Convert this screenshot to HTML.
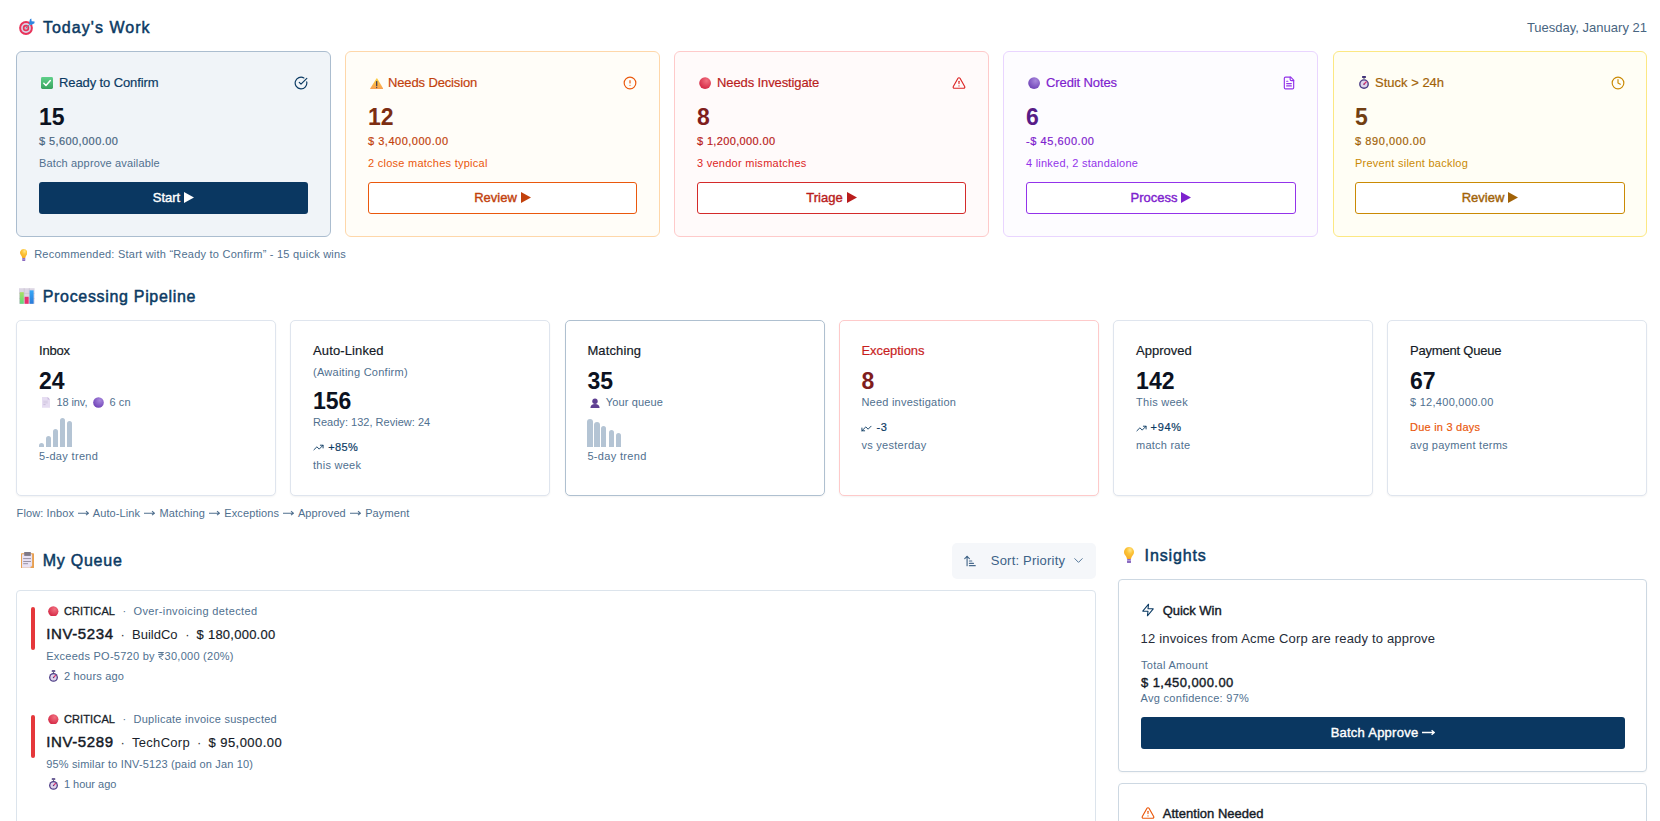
<!DOCTYPE html>
<html><head><meta charset="utf-8"><title>Today's Work</title>
<style>
html,body{margin:0;padding:0;background:#fff;}
body{width:1660px;height:821px;position:relative;overflow:hidden;font-family:"Liberation Sans", sans-serif;}
.t{position:absolute;white-space:nowrap;}
svg{display:block}
.t svg{display:inline-block}
</style></head><body>
<svg style="position:absolute;left:18.0px;top:18.0px" width="18" height="18" viewBox="0 0 18 18" ><circle cx="8" cy="10" r="6.9" fill="#e8335a"/><circle cx="8" cy="10" r="4.9" fill="#d9d2e6"/><circle cx="8" cy="10" r="3.2" fill="#e8335a"/><circle cx="8" cy="10" r="1.5" fill="#d9d2e6"/><circle cx="8" cy="10" r=".6" fill="#8a7a90"/><path d="M8 10 L12.5 5.5" stroke="#7a8aa0" stroke-width="1"/><path d="M10.5 7.5 L12.8 4.4 L13.2 6.8 Z" fill="#46b4f0"/><path d="M12 1.2 L13.3 0.6 L13.6 3.2 L16.6 3.4 L16.4 5.2 L13.4 7 L11 5 Z" fill="#2f86e0"/></svg>
<div id="t317fed02" class="t" style="left:42.9px;top:20px;font-size:16px;line-height:16px;color:#0b3a63;-webkit-text-stroke:0.48px currentColor;letter-spacing:1.042px;">Today's Work</div>
<div id="t44567f1c" class="t" style="right:13.0px;top:21px;font-size:13px;line-height:13px;color:#486581;letter-spacing:0.008px;">Tuesday, January 21</div>
<div style="position:absolute;left:16.0px;top:51.0px;width:315.0px;height:186.0px;box-sizing:border-box;border:1px solid #abbdcf;background:#f0f4f8;border-radius:6px;"></div>
<svg style="position:absolute;left:41.0px;top:76.5px" width="12" height="12" viewBox="0 0 12 12" ><defs><linearGradient id="gck" x1="0" y1="0" x2="0" y2="1"><stop offset="0" stop-color="#5fd08a"/><stop offset="1" stop-color="#38a35e"/></linearGradient></defs><rect x="0" y="0" width="12" height="12" rx="1.4" fill="url(#gck)"/><path d="M2.8 6.3 L5 8.5 L9.3 3.6" fill="none" stroke="#fff" stroke-width="1.5" stroke-linecap="round" stroke-linejoin="round"/></svg>
<div id="tb0c5841e" class="t" style="left:59.0px;top:76px;font-size:13px;line-height:13px;color:#0b3a63;-webkit-text-stroke:0.18px currentColor;letter-spacing:-0.104px;">Ready to Confirm</div>
<svg style="position:absolute;left:294.0px;top:76.0px" width="14" height="14" viewBox="0 0 24 24" fill="none" stroke="#0b3a63" stroke-width="2" stroke-linecap="round" stroke-linejoin="round"><path d="M21.801 10A10 10 0 1 1 17 3.335"/><path d="m9 11 3 3L22 4"/></svg>
<div id="t6840ec25" class="t" style="left:39.0px;top:106px;font-size:23px;line-height:23px;color:#0c1221;font-weight:700;">15</div>
<div id="t1ae9d989" class="t" style="left:39.0px;top:136px;font-size:11px;line-height:11px;color:#486581;-webkit-text-stroke:0.18px currentColor;letter-spacing:0.415px;">$ 5,600,000.00</div>
<div id="tfbac6d84" class="t" style="left:39.0px;top:158px;font-size:11px;line-height:11px;color:#50708f;letter-spacing:0.149px;">Batch approve available</div>
<div style="position:absolute;left:39.0px;top:182.0px;width:269.0px;height:32.0px;background:#0a3761;border-radius:3px;"></div>
<div id="t3e6e39a4" class="t" style="left:39.0px;width:269.0px;text-align:center;top:191px;font-size:13px;line-height:13px;color:#ffffff;-webkit-text-stroke:0.39px currentColor;">Start<svg width="10" height="11" viewBox="0 0 10 11" style="display:inline-block;vertical-align:-1px;margin-left:4px"><path d="M0 0L10 5.5L0 11Z" fill="currentColor"/></svg></div>
<div style="position:absolute;left:345.0px;top:51.0px;width:315.0px;height:186.0px;box-sizing:border-box;border:1px solid #fed7aa;background:#fffdf8;border-radius:6px;"></div>
<svg style="position:absolute;left:369.5px;top:78.0px" width="13.4" height="11" viewBox="0 0 13.4 11" ><defs><linearGradient id="gwn" x1="0" y1="0" x2="0" y2="1"><stop offset="0" stop-color="#fcd040"/><stop offset="1" stop-color="#f9a050"/></linearGradient></defs><path d="M6.6 0.2 Q7 0 7.3 0.4 L13.2 10.6 Q13.4 11 13 11 L0.4 11 Q0 11 0.2 10.6 Z" fill="url(#gwn)"/><rect x="6.1" y="3" width="1.2" height="5.3" rx=".5" fill="#3a3550"/><circle cx="6.7" cy="9.6" r=".65" fill="#3a3550"/></svg>
<div id="t90fc54c8" class="t" style="left:388.0px;top:76px;font-size:13px;line-height:13px;color:#c2410c;-webkit-text-stroke:0.18px currentColor;letter-spacing:-0.134px;">Needs Decision</div>
<svg style="position:absolute;left:623.0px;top:76.0px" width="14" height="14" viewBox="0 0 24 24" fill="none" stroke="#ea580c" stroke-width="2" stroke-linecap="round" stroke-linejoin="round"><circle cx="12" cy="12" r="10"/><line x1="12" x2="12" y1="8" y2="12"/><line x1="12" x2="12.01" y1="16" y2="16"/></svg>
<div id="ted9cfb10" class="t" style="left:368.0px;top:106px;font-size:23px;line-height:23px;color:#7c2d12;font-weight:700;">12</div>
<div id="t7c6884d7" class="t" style="left:368.0px;top:136px;font-size:11px;line-height:11px;color:#c2410c;-webkit-text-stroke:0.18px currentColor;letter-spacing:0.508px;">$ 3,400,000.00</div>
<div id="t6dd6b202" class="t" style="left:368.0px;top:158px;font-size:11px;line-height:11px;color:#ea580c;letter-spacing:0.258px;">2 close matches typical</div>
<div style="position:absolute;left:368.0px;top:182.0px;width:269.0px;height:32.0px;box-sizing:border-box;border:1.5px solid #ea580c;background:#fff;border-radius:3px;"></div>
<div id="t7f49a446" class="t" style="left:368.0px;width:269.0px;text-align:center;top:191px;font-size:13px;line-height:13px;color:#c2410c;-webkit-text-stroke:0.39px currentColor;">Review<svg width="10" height="11" viewBox="0 0 10 11" style="display:inline-block;vertical-align:-1px;margin-left:4px"><path d="M0 0L10 5.5L0 11Z" fill="currentColor"/></svg></div>
<div style="position:absolute;left:674.0px;top:51.0px;width:315.0px;height:186.0px;box-sizing:border-box;border:1px solid #fecaca;background:#fffafa;border-radius:6px;"></div>
<svg style="position:absolute;left:699.0px;top:76.8px" width="12.2" height="12.2" viewBox="0 0 12 12" ><defs><radialGradient id="g1" cx="62%" cy="30%" r="80%"><stop offset="0" stop-color="#f27080"/><stop offset="1" stop-color="#d0203e"/></radialGradient></defs><circle cx="6" cy="6" r="5.8" fill="url(#g1)"/></svg>
<div id="t294f25de" class="t" style="left:717.0px;top:76px;font-size:13px;line-height:13px;color:#b91c1c;-webkit-text-stroke:0.18px currentColor;letter-spacing:-0.111px;">Needs Investigate</div>
<svg style="position:absolute;left:952.0px;top:76.0px" width="14" height="14" viewBox="0 0 24 24" fill="none" stroke="#dc2626" stroke-width="2" stroke-linecap="round" stroke-linejoin="round"><path d="m21.73 18-8-14a2 2 0 0 0-3.48 0l-8 14A2 2 0 0 0 4 21h16a2 2 0 0 0 1.73-3"/><path d="M12 9v4"/><path d="M12 17h.01"/></svg>
<div id="t9b16b431" class="t" style="left:697.0px;top:106px;font-size:23px;line-height:23px;color:#7f1d1d;font-weight:700;">8</div>
<div id="t365aa6dc" class="t" style="left:697.0px;top:136px;font-size:11px;line-height:11px;color:#b91c1c;-webkit-text-stroke:0.18px currentColor;letter-spacing:0.354px;">$ 1,200,000.00</div>
<div id="tfd7c1569" class="t" style="left:697.0px;top:158px;font-size:11px;line-height:11px;color:#dc2626;letter-spacing:0.264px;">3 vendor mismatches</div>
<div style="position:absolute;left:697.0px;top:182.0px;width:269.0px;height:32.0px;box-sizing:border-box;border:1.5px solid #d42a2a;background:#fff;border-radius:3px;"></div>
<div id="tae7287b3" class="t" style="left:697.0px;width:269.0px;text-align:center;top:191px;font-size:13px;line-height:13px;color:#b91c1c;-webkit-text-stroke:0.39px currentColor;">Triage<svg width="10" height="11" viewBox="0 0 10 11" style="display:inline-block;vertical-align:-1px;margin-left:4px"><path d="M0 0L10 5.5L0 11Z" fill="currentColor"/></svg></div>
<div style="position:absolute;left:1003.0px;top:51.0px;width:315.0px;height:186.0px;box-sizing:border-box;border:1px solid #e9d5ff;background:#fdfcff;border-radius:6px;"></div>
<svg style="position:absolute;left:1028.0px;top:76.8px" width="12.2" height="12.2" viewBox="0 0 12 12" ><defs><radialGradient id="g2" cx="62%" cy="30%" r="80%"><stop offset="0" stop-color="#a888dc"/><stop offset="1" stop-color="#6a3cb4"/></radialGradient></defs><circle cx="6" cy="6" r="5.8" fill="url(#g2)"/></svg>
<div id="t7fb84250" class="t" style="left:1046.0px;top:76px;font-size:13px;line-height:13px;color:#7e22ce;-webkit-text-stroke:0.18px currentColor;letter-spacing:-0.105px;">Credit Notes</div>
<svg style="position:absolute;left:1282.0px;top:76.0px" width="14" height="14" viewBox="0 0 24 24" fill="none" stroke="#9333ea" stroke-width="2" stroke-linecap="round" stroke-linejoin="round"><path d="M15 2H6a2 2 0 0 0-2 2v16a2 2 0 0 0 2 2h12a2 2 0 0 0 2-2V7Z"/><path d="M14 2v4a2 2 0 0 0 2 2h4"/><path d="M10 9H8"/><path d="M16 13H8"/><path d="M16 17H8"/></svg>
<div id="te94cbec0" class="t" style="left:1026.0px;top:106px;font-size:23px;line-height:23px;color:#581c87;font-weight:700;">6</div>
<div id="t9c280847" class="t" style="left:1026.0px;top:136px;font-size:11px;line-height:11px;color:#7e22ce;-webkit-text-stroke:0.18px currentColor;letter-spacing:0.565px;">-$ 45,600.00</div>
<div id="t48015f51" class="t" style="left:1026.0px;top:158px;font-size:11px;line-height:11px;color:#9333ea;letter-spacing:0.232px;">4 linked, 2 standalone</div>
<div style="position:absolute;left:1026.0px;top:182.0px;width:270.0px;height:32.0px;box-sizing:border-box;border:1.5px solid #9333ea;background:#fff;border-radius:3px;"></div>
<div id="t68502e40" class="t" style="left:1026.0px;width:270.0px;text-align:center;top:191px;font-size:13px;line-height:13px;color:#7e22ce;-webkit-text-stroke:0.39px currentColor;">Process<svg width="10" height="11" viewBox="0 0 10 11" style="display:inline-block;vertical-align:-1px;margin-left:4px"><path d="M0 0L10 5.5L0 11Z" fill="currentColor"/></svg></div>
<div style="position:absolute;left:1333.0px;top:51.0px;width:314.0px;height:186.0px;box-sizing:border-box;border:1px solid #fce883;background:#fffef5;border-radius:6px;"></div>
<svg style="position:absolute;left:1359.0px;top:75.9px" width="10" height="13" viewBox="0 0 10 13" ><rect x="3" y="0" width="4" height="1.9" rx=".7" fill="#3f2f78"/><rect x="4.4" y="1.7" width="1.2" height="1.4" fill="#6a6a7a"/><circle cx="5" cy="8.1" r="4.9" fill="#4a3a84"/><circle cx="5" cy="8.1" r="3.5" fill="#ddd4ea"/><path d="M5 8.3 L7.2 5.9" stroke="#e0306a" stroke-width="1.3" stroke-linecap="round"/><circle cx="5" cy="8.1" r=".7" fill="#4a3a84"/></svg>
<div id="t3705e3d0" class="t" style="left:1375.0px;top:76px;font-size:13px;line-height:13px;color:#a16207;-webkit-text-stroke:0.18px currentColor;letter-spacing:0.007px;">Stuck &gt; 24h</div>
<svg style="position:absolute;left:1611.0px;top:76.0px" width="14" height="14" viewBox="0 0 24 24" fill="none" stroke="#ca8a04" stroke-width="2" stroke-linecap="round" stroke-linejoin="round"><circle cx="12" cy="12" r="10"/><polyline points="12 6 12 12 16 14"/></svg>
<div id="t4db04283" class="t" style="left:1355.0px;top:106px;font-size:23px;line-height:23px;color:#713f12;font-weight:700;">5</div>
<div id="t975d0fa7" class="t" style="left:1355.0px;top:136px;font-size:11px;line-height:11px;color:#a16207;-webkit-text-stroke:0.18px currentColor;letter-spacing:0.587px;">$ 890,000.00</div>
<div id="t7a462bca" class="t" style="left:1355.0px;top:158px;font-size:11px;line-height:11px;color:#ca8a04;letter-spacing:0.247px;">Prevent silent backlog</div>
<div style="position:absolute;left:1355.0px;top:182.0px;width:270.0px;height:32.0px;box-sizing:border-box;border:1.5px solid #ca8a04;background:#fff;border-radius:3px;"></div>
<div id="t40595d12" class="t" style="left:1355.0px;width:270.0px;text-align:center;top:191px;font-size:13px;line-height:13px;color:#a16207;-webkit-text-stroke:0.39px currentColor;">Review<svg width="10" height="11" viewBox="0 0 10 11" style="display:inline-block;vertical-align:-1px;margin-left:4px"><path d="M0 0L10 5.5L0 11Z" fill="currentColor"/></svg></div>
<svg style="position:absolute;left:19.5px;top:248.5px" width="7.5" height="12" viewBox="0 0 10 16" ><defs><radialGradient id="g3" cx="60%" cy="25%" r="80%"><stop offset="0" stop-color="#ffe58a"/><stop offset=".4" stop-color="#fcc53a"/><stop offset="1" stop-color="#f7a820"/></radialGradient></defs><path d="M5 0 A5 5 0 0 1 8.6 8.4 Q7.4 9.6 7 12 L3 12 Q2.6 9.6 1.4 8.4 A5 5 0 0 1 5 0 Z" fill="url(#g3)"/><rect x="3" y="12" width="4" height="4" rx=".8" fill="#8a6ac0"/><rect x="3" y="13.2" width="4" height=".7" fill="#c8b6e6"/></svg>
<div id="t0f0da628" class="t" style="left:34.2px;top:249px;font-size:11px;line-height:11px;color:#50708f;letter-spacing:0.234px;">Recommended: Start with &#8220;Ready to Confirm&#8221; - 15 quick wins</div>
<svg style="position:absolute;left:19.1px;top:288.0px" width="15.6" height="16" viewBox="0 0 16 16" ><rect x="0" y="0" width="16" height="16" fill="#dcd6e4"/><path d="M5.3 0 V16 M10.6 0 V16 M0 5.3 H16 M0 10.6 H16" stroke="#c4bccc" stroke-width=".6"/><defs><linearGradient id="gcg" x1="0" y1="0" x2="0" y2="1"><stop offset="0" stop-color="#a8e060"/><stop offset="1" stop-color="#60d880"/></linearGradient><linearGradient id="gcb" x1="0" y1="0" x2="0" y2="1"><stop offset="0" stop-color="#36a8f8"/><stop offset="1" stop-color="#2a7ad8"/></linearGradient></defs><rect x="0.8" y="4.1" width="4.1" height="11.9" fill="url(#gcg)"/><rect x="5.8" y="8.8" width="4.1" height="7.2" fill="#e8306e"/><rect x="10.9" y="2.2" width="4.1" height="13.8" fill="url(#gcb)"/></svg>
<div id="t9b2a11a3" class="t" style="left:42.7px;top:289px;font-size:16px;line-height:16px;color:#0b3a63;-webkit-text-stroke:0.48px currentColor;letter-spacing:0.682px;">Processing Pipeline</div>
<div style="position:absolute;left:16.0px;top:320.0px;width:260.0px;height:176.0px;box-sizing:border-box;border:1px solid #dfe5ee;background:#fff;border-radius:5px;box-shadow:0 1px 2px rgba(0,0,0,0.05);"></div>
<div style="position:absolute;left:290.0px;top:320.0px;width:260.0px;height:176.0px;box-sizing:border-box;border:1px solid #dfe5ee;background:#fff;border-radius:5px;box-shadow:0 1px 2px rgba(0,0,0,0.05);"></div>
<div style="position:absolute;left:565.0px;top:320.0px;width:260.0px;height:176.0px;box-sizing:border-box;border:1px solid #afc0d0;background:#fff;border-radius:5px;box-shadow:0 1px 2px rgba(0,0,0,0.05);"></div>
<div style="position:absolute;left:839.0px;top:320.0px;width:260.0px;height:176.0px;box-sizing:border-box;border:1px solid #fecaca;background:#fff;border-radius:5px;box-shadow:0 1px 2px rgba(0,0,0,0.05);"></div>
<div style="position:absolute;left:1113.0px;top:320.0px;width:260.0px;height:176.0px;box-sizing:border-box;border:1px solid #dfe5ee;background:#fff;border-radius:5px;box-shadow:0 1px 2px rgba(0,0,0,0.05);"></div>
<div style="position:absolute;left:1387.0px;top:320.0px;width:260.0px;height:176.0px;box-sizing:border-box;border:1px solid #dfe5ee;background:#fff;border-radius:5px;box-shadow:0 1px 2px rgba(0,0,0,0.05);"></div>
<div id="t95ac02fe" class="t" style="left:39.0px;top:344px;font-size:13px;line-height:13px;color:#141a26;-webkit-text-stroke:0.18px currentColor;letter-spacing:-0.202px;">Inbox</div>
<div id="t174eace2" class="t" style="left:39.0px;top:370px;font-size:23px;line-height:23px;color:#0c1221;font-weight:700;">24</div>
<svg style="position:absolute;left:42.0px;top:397.0px" width="8" height="10.8" viewBox="0 0 8 10.8" ><path d="M0 0 H5.6 L8 2.4 V10.8 H0 Z" fill="#e6ddf2"/><path d="M5.6 0 V2.4 H8 Z" fill="#c9b8dc"/><rect x="1.3" y="3.6" width="4.4" height="3" fill="#d6cce4" opacity=".8"/><path d="M1.3 7.6 H3.6" stroke="#b8aacb" stroke-width=".6"/></svg>
<div id="t2a19e988" class="t" style="left:56.6px;top:397px;font-size:11px;line-height:11px;color:#50708f;letter-spacing:-0.116px;">18 inv,</div>
<svg style="position:absolute;left:93.0px;top:396.8px" width="11" height="11" viewBox="0 0 12 12" ><defs><radialGradient id="g4" cx="62%" cy="30%" r="80%"><stop offset="0" stop-color="#a888dc"/><stop offset="1" stop-color="#6a3cb4"/></radialGradient></defs><circle cx="6" cy="6" r="5.8" fill="url(#g4)"/></svg>
<div id="tf9eb825a" class="t" style="left:109.4px;top:397px;font-size:11px;line-height:11px;color:#50708f;letter-spacing:0.133px;">6 cn</div>
<div style="position:absolute;left:39.0px;top:443.0px;width:5.0px;height:4.0px;background:#b4c4d4;border-radius:2.5px 2.5px 0 0;"></div>
<div style="position:absolute;left:46.1px;top:436.0px;width:5.0px;height:11.0px;background:#b4c4d4;border-radius:2.5px 2.5px 0 0;"></div>
<div style="position:absolute;left:53.2px;top:429.0px;width:5.0px;height:18.0px;background:#b4c4d4;border-radius:2.5px 2.5px 0 0;"></div>
<div style="position:absolute;left:60.3px;top:418.0px;width:5.0px;height:29.0px;background:#b4c4d4;border-radius:2.5px 2.5px 0 0;"></div>
<div style="position:absolute;left:67.4px;top:421.0px;width:5.0px;height:26.0px;background:#b4c4d4;border-radius:2.5px 2.5px 0 0;"></div>
<div id="t269ba9d4" class="t" style="left:39.0px;top:451px;font-size:11px;line-height:11px;color:#50708f;letter-spacing:0.324px;">5-day trend</div>
<div id="t59c57c16" class="t" style="left:313.0px;top:344px;font-size:13px;line-height:13px;color:#141a26;-webkit-text-stroke:0.18px currentColor;letter-spacing:0.121px;">Auto-Linked</div>
<div id="t6d39dfa5" class="t" style="left:313.0px;top:367px;font-size:11px;line-height:11px;color:#50708f;letter-spacing:0.255px;">(Awaiting Confirm)</div>
<div id="t04ad7436" class="t" style="left:313.0px;top:390px;font-size:23px;line-height:23px;color:#0c1221;font-weight:700;">156</div>
<div id="tbc1a9ae2" class="t" style="left:313.0px;top:417px;font-size:11px;line-height:11px;color:#50708f;letter-spacing:0.019px;">Ready: 132, Review: 24</div>
<svg style="position:absolute;left:313.0px;top:442.0px" width="11" height="11" viewBox="0 0 24 24" fill="none" stroke="#0b3a63" stroke-width="2" stroke-linecap="round" stroke-linejoin="round"><polyline points="22 7 13.5 15.5 8.5 10.5 2 17"/><polyline points="16 7 22 7 22 13"/></svg>
<div id="t3278b6ca" class="t" style="left:328.2px;top:442px;font-size:11px;line-height:11px;color:#0b3a63;-webkit-text-stroke:0.18px currentColor;letter-spacing:0.348px;">+85%</div>
<div id="ta2754951" class="t" style="left:313.0px;top:460px;font-size:11px;line-height:11px;color:#50708f;letter-spacing:0.268px;">this week</div>
<div id="t8afefc63" class="t" style="left:587.4px;top:344px;font-size:13px;line-height:13px;color:#141a26;-webkit-text-stroke:0.18px currentColor;letter-spacing:0.135px;">Matching</div>
<div id="t15c0de1f" class="t" style="left:587.4px;top:370px;font-size:23px;line-height:23px;color:#0c1221;font-weight:700;">35</div>
<svg style="position:absolute;left:589.5px;top:397.5px" width="10" height="10" viewBox="0 0 10 10" ><circle cx="5" cy="3.2" r="2.7" fill="#5f3f92"/><path d="M0.4 10 Q0.6 6.2 5 6 Q9.4 6.2 9.6 10 Z" fill="#5f3f92"/></svg>
<div id="tba239a81" class="t" style="left:605.7px;top:397px;font-size:11px;line-height:11px;color:#50708f;letter-spacing:0.158px;">Your queue</div>
<div style="position:absolute;left:587.0px;top:418.5px;width:6.0px;height:28.5px;background:#b4c4d4;border-radius:3.0px 3.0px 0 0;"></div>
<div style="position:absolute;left:594.2px;top:421.5px;width:6.0px;height:25.5px;background:#b4c4d4;border-radius:3.0px 3.0px 0 0;"></div>
<div style="position:absolute;left:601.4px;top:425.5px;width:5.0px;height:21.5px;background:#b4c4d4;border-radius:2.5px 2.5px 0 0;"></div>
<div style="position:absolute;left:608.6px;top:429.5px;width:5.0px;height:17.5px;background:#b4c4d4;border-radius:2.5px 2.5px 0 0;"></div>
<div style="position:absolute;left:615.8px;top:432.5px;width:5.0px;height:14.5px;background:#b4c4d4;border-radius:2.5px 2.5px 0 0;"></div>
<div id="t53017905" class="t" style="left:587.4px;top:451px;font-size:11px;line-height:11px;color:#50708f;letter-spacing:0.324px;">5-day trend</div>
<div id="tc22b44fd" class="t" style="left:861.4px;top:344px;font-size:13px;line-height:13px;color:#c81e1e;-webkit-text-stroke:0.18px currentColor;letter-spacing:-0.055px;">Exceptions</div>
<div id="t54c664ff" class="t" style="left:861.4px;top:370px;font-size:23px;line-height:23px;color:#7f1d1d;font-weight:700;">8</div>
<div id="t6f94ffde" class="t" style="left:861.4px;top:397px;font-size:11px;line-height:11px;color:#50708f;letter-spacing:0.235px;">Need investigation</div>
<svg style="position:absolute;left:861.0px;top:423.0px" width="11" height="11" viewBox="0 0 24 24" fill="none" stroke="#0b3a63" stroke-width="2" stroke-linecap="round" stroke-linejoin="round"><polyline points="2 17 10.5 8.5 15.5 13.5 22 7"/><polyline points="8 17 2 17 2 11"/></svg>
<div id="t4ccda391" class="t" style="left:876.6px;top:422px;font-size:11px;line-height:11px;color:#0b3a63;-webkit-text-stroke:0.18px currentColor;letter-spacing:0.616px;">-3</div>
<div id="t42231123" class="t" style="left:861.4px;top:440px;font-size:11px;line-height:11px;color:#50708f;letter-spacing:0.277px;">vs yesterday</div>
<div id="t45270a40" class="t" style="left:1136.1px;top:344px;font-size:13px;line-height:13px;color:#141a26;-webkit-text-stroke:0.18px currentColor;letter-spacing:0.005px;">Approved</div>
<div id="tc37859f4" class="t" style="left:1136.1px;top:370px;font-size:23px;line-height:23px;color:#0c1221;font-weight:700;">142</div>
<div id="ta52e56ea" class="t" style="left:1136.1px;top:397px;font-size:11px;line-height:11px;color:#50708f;letter-spacing:0.259px;">This week</div>
<svg style="position:absolute;left:1136.0px;top:423.0px" width="11" height="11" viewBox="0 0 24 24" fill="none" stroke="#0b3a63" stroke-width="2" stroke-linecap="round" stroke-linejoin="round"><polyline points="22 7 13.5 15.5 8.5 10.5 2 17"/><polyline points="16 7 22 7 22 13"/></svg>
<div id="t294d70d7" class="t" style="left:1150.6px;top:422px;font-size:11px;line-height:11px;color:#0b3a63;-webkit-text-stroke:0.18px currentColor;letter-spacing:0.648px;">+94%</div>
<div id="t6c4b99ea" class="t" style="left:1136.1px;top:440px;font-size:11px;line-height:11px;color:#50708f;letter-spacing:0.225px;">match rate</div>
<div id="t3095dd2f" class="t" style="left:1410.0px;top:344px;font-size:13px;line-height:13px;color:#141a26;-webkit-text-stroke:0.18px currentColor;letter-spacing:-0.204px;">Payment Queue</div>
<div id="te2948641" class="t" style="left:1410.0px;top:370px;font-size:23px;line-height:23px;color:#0c1221;font-weight:700;">67</div>
<div id="td16505c7" class="t" style="left:1410.0px;top:397px;font-size:11px;line-height:11px;color:#50708f;letter-spacing:0.276px;">$ 12,400,000.00</div>
<div id="t72e03aca" class="t" style="left:1410.0px;top:422px;font-size:11px;line-height:11px;color:#ea580c;-webkit-text-stroke:0.18px currentColor;letter-spacing:0.227px;">Due in 3 days</div>
<div id="t76085bb4" class="t" style="left:1410.0px;top:440px;font-size:11px;line-height:11px;color:#50708f;letter-spacing:0.254px;">avg payment terms</div>
<div id="t16c427bd" class="t" style="left:16.6px;top:508px;font-size:11px;line-height:11px;color:#50708f;letter-spacing:0.106px;">Flow: Inbox <svg width="11" height="6" viewBox="0 0 11 6" style="vertical-align:1px;margin:0 1px"><path d="M0 3.2H10.2M8 1.2L10.4 3.2L8 5.2" fill="none" stroke="currentColor" stroke-width="1.1"/></svg> Auto-Link <svg width="11" height="6" viewBox="0 0 11 6" style="vertical-align:1px;margin:0 1px"><path d="M0 3.2H10.2M8 1.2L10.4 3.2L8 5.2" fill="none" stroke="currentColor" stroke-width="1.1"/></svg> Matching <svg width="11" height="6" viewBox="0 0 11 6" style="vertical-align:1px;margin:0 1px"><path d="M0 3.2H10.2M8 1.2L10.4 3.2L8 5.2" fill="none" stroke="currentColor" stroke-width="1.1"/></svg> Exceptions <svg width="11" height="6" viewBox="0 0 11 6" style="vertical-align:1px;margin:0 1px"><path d="M0 3.2H10.2M8 1.2L10.4 3.2L8 5.2" fill="none" stroke="currentColor" stroke-width="1.1"/></svg> Approved <svg width="11" height="6" viewBox="0 0 11 6" style="vertical-align:1px;margin:0 1px"><path d="M0 3.2H10.2M8 1.2L10.4 3.2L8 5.2" fill="none" stroke="currentColor" stroke-width="1.1"/></svg> Payment</div>
<svg style="position:absolute;left:21.0px;top:551.8px" width="13" height="16.2" viewBox="0 0 13 16.2" ><rect x="0" y="1.2" width="13" height="15" rx=".6" fill="#e8a050"/><path d="M1 2.2 H11.1 V13.4 L9 15.7 H1 Z" fill="#e8e2f4"/><path d="M9 15.7 L11.1 13.4 L9.3 13.4 Z" fill="#d8d0e4"/><path d="M3.2 0 H9.8 V3.9 H3.2 Z" fill="#7e7886"/><path d="M2.2 6.6 H10 M2.2 9.5 H10 M2.2 11.7 H7" stroke="#8e889a" stroke-width=".9"/></svg>
<div id="t9e12ebd3" class="t" style="left:42.8px;top:553px;font-size:16px;line-height:16px;color:#0b3a63;-webkit-text-stroke:0.48px currentColor;letter-spacing:0.740px;">My Queue</div>
<div style="position:absolute;left:952.0px;top:543.0px;width:144.0px;height:36.0px;background:#f5f7fa;border-radius:5px;"></div>
<svg style="position:absolute;left:962.5px;top:554.0px" width="14" height="14" viewBox="0 0 24 24" fill="none" stroke="#486a8c" stroke-width="2" stroke-linecap="round" stroke-linejoin="round"><path d="m3 8 4-4 4 4"/><path d="M7 4v16"/><path d="M11 12h4"/><path d="M11 16h7"/><path d="M11 20h10"/></svg>
<div id="tb9661070" class="t" style="left:990.8px;top:554px;font-size:13px;line-height:13px;color:#3d6287;letter-spacing:0.206px;">Sort: Priority</div>
<svg style="position:absolute;left:1070.5px;top:553.0px" width="15" height="15" viewBox="0 0 24 24" fill="none" stroke="#56789a" stroke-width="1.6" stroke-linecap="round" stroke-linejoin="round"><path d="m6 9 6 6 6-6"/></svg>
<div style="position:absolute;left:16.0px;top:590.0px;width:1080.0px;height:260.0px;box-sizing:border-box;border:1px solid #dce4ec;background:#fff;border-radius:4px;"></div>
<div style="position:absolute;left:31.0px;top:607.0px;width:4.0px;height:43.0px;background:#e5383b;border-radius:2px;"></div>
<svg style="position:absolute;left:48.0px;top:605.8px" width="10.6" height="10.6" viewBox="0 0 12 12" ><defs><radialGradient id="g5" cx="62%" cy="30%" r="80%"><stop offset="0" stop-color="#f27080"/><stop offset="1" stop-color="#d0203e"/></radialGradient></defs><circle cx="6" cy="6" r="5.8" fill="url(#g5)"/></svg>
<div id="tf4942d62" class="t" style="left:63.9px;top:606px;font-size:11px;line-height:11px;color:#1a1f2b;-webkit-text-stroke:0.33px currentColor;letter-spacing:0.140px;">CRITICAL</div>
<div id="td2fc9b23" class="t" style="left:122.5px;top:606px;font-size:11px;line-height:11px;color:#50708f;">&#183;</div>
<div id="t61f6c278" class="t" style="left:133.5px;top:606px;font-size:11px;line-height:11px;color:#50708f;letter-spacing:0.365px;">Over-invoicing detected</div>
<div id="t68079682" class="t" style="left:46.2px;top:626px;font-size:15px;line-height:15px;color:#141a26;-webkit-text-stroke:0.45px currentColor;letter-spacing:0.608px;">INV-5234</div>
<div id="tedaadce8" class="t" style="left:120.5px;top:628px;font-size:13px;line-height:13px;color:#333;">&#183;</div>
<div id="t7133b604" class="t" style="left:132.0px;top:628px;font-size:13px;line-height:13px;color:#1a1f2b;letter-spacing:-0.004px;">BuildCo</div>
<div id="tecc99b52" class="t" style="left:185.3px;top:628px;font-size:13px;line-height:13px;color:#333;">&#183;</div>
<div id="t82bf19de" class="t" style="left:196.6px;top:628px;font-size:13px;line-height:13px;color:#141a26;-webkit-text-stroke:0.18px currentColor;letter-spacing:0.244px;">$ 180,000.00</div>
<div id="tfd8ef77f" class="t" style="left:46.2px;top:651px;font-size:11px;line-height:11px;color:#50708f;letter-spacing:0.258px;">Exceeds PO-5720 by <svg width="6" height="8" viewBox="0 0 6 8" style="display:inline-block;vertical-align:0px;margin-right:0.5px"><path d="M0.2 0.5H5.8M0.2 2.6H5.8M0.9 0.5Q4.7 0.5 4.7 2.6Q4.7 4.7 0.9 4.7L4.9 8" fill="none" stroke="currentColor" stroke-width="0.95"/></svg>30,000 (20%)</div>
<svg style="position:absolute;left:48.5px;top:670.0px" width="9" height="12" viewBox="0 0 10 13" ><rect x="3" y="0" width="4" height="1.9" rx=".7" fill="#3f2f78"/><rect x="4.4" y="1.7" width="1.2" height="1.4" fill="#6a6a7a"/><circle cx="5" cy="8.1" r="4.9" fill="#4a3a84"/><circle cx="5" cy="8.1" r="3.5" fill="#ddd4ea"/><path d="M5 8.3 L7.2 5.9" stroke="#e0306a" stroke-width="1.3" stroke-linecap="round"/><circle cx="5" cy="8.1" r=".7" fill="#4a3a84"/></svg>
<div id="t1bf90607" class="t" style="left:63.9px;top:671px;font-size:11px;line-height:11px;color:#50708f;letter-spacing:0.199px;">2 hours ago</div>
<div style="position:absolute;left:31.0px;top:715.0px;width:4.0px;height:43.0px;background:#e5383b;border-radius:2px;"></div>
<svg style="position:absolute;left:48.0px;top:713.8px" width="10.6" height="10.6" viewBox="0 0 12 12" ><defs><radialGradient id="g6" cx="62%" cy="30%" r="80%"><stop offset="0" stop-color="#f27080"/><stop offset="1" stop-color="#d0203e"/></radialGradient></defs><circle cx="6" cy="6" r="5.8" fill="url(#g6)"/></svg>
<div id="t6c751d0a" class="t" style="left:63.9px;top:714px;font-size:11px;line-height:11px;color:#1a1f2b;-webkit-text-stroke:0.33px currentColor;letter-spacing:0.140px;">CRITICAL</div>
<div id="t80f67af1" class="t" style="left:122.5px;top:714px;font-size:11px;line-height:11px;color:#50708f;">&#183;</div>
<div id="t1963b9db" class="t" style="left:133.5px;top:714px;font-size:11px;line-height:11px;color:#50708f;letter-spacing:0.263px;">Duplicate invoice suspected</div>
<div id="te14740b4" class="t" style="left:46.2px;top:734px;font-size:15px;line-height:15px;color:#141a26;-webkit-text-stroke:0.45px currentColor;letter-spacing:0.608px;">INV-5289</div>
<div id="t61fd1d4a" class="t" style="left:120.5px;top:736px;font-size:13px;line-height:13px;color:#333;">&#183;</div>
<div id="t67385bd1" class="t" style="left:132.0px;top:736px;font-size:13px;line-height:13px;color:#1a1f2b;letter-spacing:0.293px;">TechCorp</div>
<div id="tc37a45ca" class="t" style="left:197.0px;top:736px;font-size:13px;line-height:13px;color:#333;">&#183;</div>
<div id="t29388ffe" class="t" style="left:208.4px;top:736px;font-size:13px;line-height:13px;color:#141a26;-webkit-text-stroke:0.18px currentColor;letter-spacing:0.472px;">$ 95,000.00</div>
<div id="t07ac559f" class="t" style="left:46.2px;top:759px;font-size:11px;line-height:11px;color:#50708f;letter-spacing:0.157px;">95% similar to INV-5123 (paid on Jan 10)</div>
<svg style="position:absolute;left:48.5px;top:778.0px" width="9" height="12" viewBox="0 0 10 13" ><rect x="3" y="0" width="4" height="1.9" rx=".7" fill="#3f2f78"/><rect x="4.4" y="1.7" width="1.2" height="1.4" fill="#6a6a7a"/><circle cx="5" cy="8.1" r="4.9" fill="#4a3a84"/><circle cx="5" cy="8.1" r="3.5" fill="#ddd4ea"/><path d="M5 8.3 L7.2 5.9" stroke="#e0306a" stroke-width="1.3" stroke-linecap="round"/><circle cx="5" cy="8.1" r=".7" fill="#4a3a84"/></svg>
<div id="t3cf3f87c" class="t" style="left:63.9px;top:779px;font-size:11px;line-height:11px;color:#50708f;letter-spacing:-0.012px;">1 hour ago</div>
<svg style="position:absolute;left:1124.0px;top:546.8px" width="10" height="16.2" viewBox="0 0 10 16" ><defs><radialGradient id="g7" cx="60%" cy="25%" r="80%"><stop offset="0" stop-color="#ffe58a"/><stop offset=".4" stop-color="#fcc53a"/><stop offset="1" stop-color="#f7a820"/></radialGradient></defs><path d="M5 0 A5 5 0 0 1 8.6 8.4 Q7.4 9.6 7 12 L3 12 Q2.6 9.6 1.4 8.4 A5 5 0 0 1 5 0 Z" fill="url(#g7)"/><rect x="3" y="12" width="4" height="4" rx=".8" fill="#8a6ac0"/><rect x="3" y="13.2" width="4" height=".7" fill="#c8b6e6"/></svg>
<div id="tbf126139" class="t" style="left:1144.6px;top:548px;font-size:16px;line-height:16px;color:#0b3a63;-webkit-text-stroke:0.48px currentColor;letter-spacing:0.851px;">Insights</div>
<div style="position:absolute;left:1118.0px;top:579.0px;width:529.0px;height:193.0px;box-sizing:border-box;border:1px solid #cdd8e2;background:#fff;border-radius:4px;box-shadow:0 1px 2px rgba(0,0,0,0.04);"></div>
<svg style="position:absolute;left:1141.0px;top:603.0px" width="14" height="14" viewBox="0 0 24 24" fill="none" stroke="#0b3a63" stroke-width="1.8" stroke-linecap="round" stroke-linejoin="round"><polygon points="13 2 3 14 12 14 11 22 21 10 12 10 13 2"/></svg>
<div id="tedc84f6a" class="t" style="left:1162.7px;top:604px;font-size:13px;line-height:13px;color:#141a26;-webkit-text-stroke:0.39px currentColor;letter-spacing:-0.029px;">Quick Win</div>
<div id="tc02b7f7f" class="t" style="left:1140.6px;top:632px;font-size:13px;line-height:13px;color:#262c38;letter-spacing:0.179px;">12 invoices from Acme Corp are ready to approve</div>
<div id="tfff59b9a" class="t" style="left:1141.0px;top:660px;font-size:11px;line-height:11px;color:#50708f;letter-spacing:0.282px;">Total Amount</div>
<div id="t149ab5e9" class="t" style="left:1141.0px;top:676px;font-size:13px;line-height:13px;color:#141a26;-webkit-text-stroke:0.39px currentColor;letter-spacing:0.426px;">$ 1,450,000.00</div>
<div id="t9a6db424" class="t" style="left:1140.6px;top:693px;font-size:11px;line-height:11px;color:#50708f;letter-spacing:0.286px;">Avg confidence: 97%</div>
<div style="position:absolute;left:1141.0px;top:717.0px;width:484.0px;height:32.0px;background:#0a3761;border-radius:3px;"></div>
<div id="t2f971409" class="t" style="left:1141.0px;width:484.0px;text-align:center;top:726px;font-size:13px;line-height:13px;color:#ffffff;-webkit-text-stroke:0.39px currentColor;letter-spacing:0.245px;">Batch Approve<svg width="13" height="7" viewBox="0 0 13 7" style="display:inline-block;vertical-align:1.5px;margin-left:4px"><path d="M0 3.5H12.2M9.6 1.2L12.4 3.5L9.6 5.8" fill="none" stroke="#fff" stroke-width="1.3"/></svg></div>
<div style="position:absolute;left:1118.0px;top:783.0px;width:529.0px;height:120.0px;box-sizing:border-box;border:1px solid #cdd8e2;background:#fff;border-radius:4px;"></div>
<svg style="position:absolute;left:1141.0px;top:806.0px" width="14" height="14" viewBox="0 0 24 24" fill="none" stroke="#ea580c" stroke-width="2" stroke-linecap="round" stroke-linejoin="round"><path d="m21.73 18-8-14a2 2 0 0 0-3.48 0l-8 14A2 2 0 0 0 4 21h16a2 2 0 0 0 1.73-3"/><path d="M12 9v4"/><path d="M12 17h.01"/></svg>
<div id="tab9e08b5" class="t" style="left:1162.8px;top:807px;font-size:13px;line-height:13px;color:#141a26;-webkit-text-stroke:0.39px currentColor;letter-spacing:0.022px;">Attention Needed</div>
</body></html>
